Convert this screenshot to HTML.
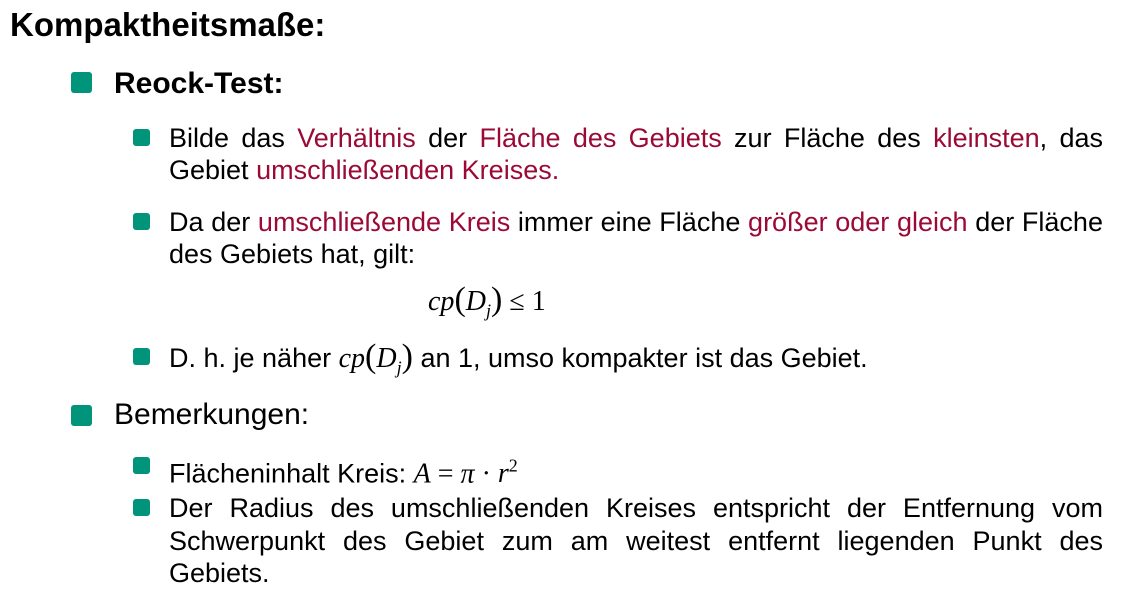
<!DOCTYPE html>
<html><head><meta charset="utf-8"><style>
body{margin:0;width:1123px;height:592px;background:#fff;position:relative;overflow:hidden;font-family:"Liberation Sans",sans-serif;color:#000}
.l{position:absolute;white-space:nowrap;line-height:30px;font-size:27px}
.j{text-align:justify;text-align-last:justify;width:934px;left:169px}
.r{color:#9b0a36}
.b1{position:absolute;left:71px;width:21px;height:21px;background:#00957a;border-radius:3px}
.b2{position:absolute;left:133px;width:17px;height:17px;background:#00957a;border-radius:3px}
.m{font-family:"Liberation Serif","DejaVu Serif",serif;font-style:italic;font-size:28px}
.n{font-family:"Liberation Serif","DejaVu Serif",serif;font-size:28px}
</style></head><body>
<div class="l" style="left:10px;top:10px;font-size:33px;font-weight:bold">Kompaktheitsmaße:</div>
<div class="b1" style="top:72px"></div>
<div class="l" style="left:114px;top:69px;font-size:30px;font-weight:bold">Reock-Test:</div>
<div class="b2" style="top:129px"></div>
<div class="l j" style="top:123px">Bilde das <span class="r">Verhältnis</span> der <span class="r">Fläche des Gebiets</span> zur Fläche des <span class="r">kleinsten</span>, das</div>
<div class="l" style="left:169px;top:155px">Gebiet <span class="r">umschließenden Kreises.</span></div>
<div class="b2" style="top:213px"></div>
<div class="l j" style="top:207px">Da der <span class="r">umschließende Kreis</span> immer eine Fläche <span class="r">größer oder gleich</span> der Fläche</div>
<div class="l" style="left:169px;top:239px">des Gebiets hat, gilt:</div>
<div class="l" style="left:428px;top:285px"><span class="m">cp</span><span class="n" style="font-size:34px">(</span><span class="m">D<sub style="font-size:18px">j</sub></span><span class="n" style="font-size:34px">)</span><span class="n"> ≤ 1</span></div>
<div class="b2" style="top:348px"></div>
<div class="l" style="left:169px;top:342px">D. h. je näher <span class="m">cp</span><span class="n" style="font-size:34px">(</span><span class="m">D<sub style="font-size:18px">j</sub></span><span class="n" style="font-size:34px">)</span> an 1, umso kompakter ist das Gebiet.</div>
<div class="b1" style="top:405px"></div>
<div class="l" style="left:114px;top:400px;font-size:30px">Bemerkungen:</div>
<div class="b2" style="top:457px"></div>
<div class="l" style="left:169px;top:451px">Flächeninhalt Kreis: <span class="m">A</span><span class="n"> = </span><span class="m">π</span><span class="n"> · </span><span class="m">r<sup style="font-size:18px;font-style:normal">2</sup></span></div>
<div class="b2" style="top:499px"></div>
<div class="l j" style="top:493px">Der Radius des umschließenden Kreises entspricht der Entfernung vom</div>
<div class="l j" style="top:526px">Schwerpunkt des Gebiet zum am weitest entfernt liegenden Punkt des</div>
<div class="l" style="left:169px;top:558px">Gebiets.</div>
</body></html>
